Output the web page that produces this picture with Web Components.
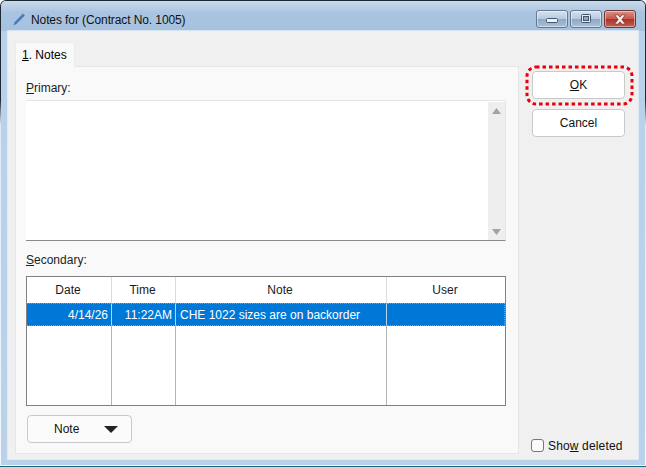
<!DOCTYPE html>
<html><head><meta charset="utf-8">
<style>
html,body{margin:0;padding:0;background:#fff}
body{font:12px "Liberation Sans",Arial,sans-serif;color:#000;width:646px;height:467px;overflow:hidden}
</style></head><body>
<notes-window>
  <notes-tabpane slot="main"></notes-tabpane>
  <notes-side slot="side"></notes-side>
</notes-window>
<template id="t-window"><style>
:host{display:block;width:646px;height:467px;box-sizing:border-box;padding:1px;background:linear-gradient(180deg,#1c2a36 0,#1c2a36 100px,#dfeaf5 125px,#f4f8fc 100%);border-bottom:1px solid #0f6a80;border-radius:6px 6px 0 0;overflow:hidden}
.frame{display:flex;flex-direction:column;height:100%;border-radius:5px 5px 0 0;background:#b9d1ea;overflow:hidden}
.title{height:30px;flex:none;display:flex;align-items:center;padding:7px 0 0 11px;gap:4px;box-sizing:border-box;font-size:12px;letter-spacing:-.1px;color:#111;background:linear-gradient(180deg,#c9daeb 0,#a9c4e0 12px,#a6c2df 100%)}
.title span{flex:1}
.caps{display:flex;gap:2px;align-self:flex-start;margin:2px 9px 0 0}
.cap{width:32px;height:18px;box-sizing:border-box;border:1px solid #64788f;border-radius:3px;background:linear-gradient(180deg,#d7e3ef 0,#b6cbe0 48%,#8fa9c4 52%,#a9c0d8 100%);display:flex;align-items:center;justify-content:center;box-shadow:inset 0 0 0 1px rgba(255,255,255,.45)}
.cap.close{border-color:#6f3530;background:linear-gradient(180deg,#d9938a 0,#c9584c 48%,#a8352a 52%,#c45d50 100%)}
.client{flex:1;display:flex;margin:0 7px 6px;background:#f0f0f0;min-height:0;padding:11px 0 0 7px;box-sizing:border-box;box-shadow:0 0 0 1px rgba(255,255,255,.55)}
</style>
<div class="frame">
<div class="title">
<svg width="15" height="15" viewBox="0 0 15 15"><path d="M1.5 13.5 L2.5 10.2 L11 1.6 L12.9 3.4 L4.4 12 Z" fill="#4a7cb8"/></svg>
<span>Notes for (Contract No. 1005)</span>
<div class="caps">
<div class="cap"><svg width="12" height="8" viewBox="0 0 12 8"><rect x=".5" y="3.5" width="11" height="4" rx="1" fill="#eef3f8" stroke="#41566c"/></svg></div>
<div class="cap"><svg width="12" height="10" viewBox="0 0 12 10"><rect x="1.5" y=".5" width="9" height="8" rx="1" fill="#e6edf4" stroke="#41566c"/><rect x="3.5" y="2.5" width="5" height="4" fill="#8fa9c4" stroke="#41566c"/></svg></div>
<div class="cap close"><svg width="14" height="11" viewBox="0 0 14 11"><path d="M1.5 .8 H5 L7 3.2 L9 .8 H12.5 L8.9 5.5 L12.5 10.2 H9 L7 7.8 L5 10.2 H1.5 L5.1 5.5 Z" fill="#f5ecea" stroke="#6d2a24" stroke-width=".7"/></svg></div>
</div></div>
<div class="client"><slot name="main"></slot><slot name="side"></slot></div>
</div>
</template>

<template id="t-tabpane"><style>
:host{display:flex;flex-direction:column;width:504px;flex:none}
.tab{width:60px;height:25px;box-sizing:border-box;background:#f9f9f9;border:1px solid #ececec;border-bottom:0;display:flex;align-items:center;padding-left:6px;position:relative;z-index:1;margin-bottom:-1px}
.panel{background:#f9f9f9;border:1px solid #e6e6e6;padding:14px 12px 0 10px;display:flex;flex-direction:column;box-sizing:border-box;height:388px}
u{text-underline-offset:1px}
.label{height:15px;line-height:15px;margin-bottom:4px;color:#222}
.text{height:141px;flex:none;box-sizing:border-box;background:#fff;border-bottom:1px solid #8a8a8a;border-top:1px solid #e6e6e6;border-right:1px solid #e6e6e6;display:flex;justify-content:flex-end;margin-bottom:12px}
.sb{width:17px;margin-top:1px;background:#eeeeee;display:flex;flex-direction:column;justify-content:space-between;align-items:center;padding:6px 0 5px;box-sizing:border-box}
.sb svg{display:block}
.btn-row{margin-top:9px;padding-left:1px}
</style>
<div class="tab"><span><u>1</u>. Notes</span></div>
<div class="panel">
<div class="label"><u>P</u>rimary:</div>
<div class="text"><div class="sb">
<svg width="9" height="6"><path d="M4.5 0 L9 6 H0 Z" fill="#a3a3a3"/></svg>
<svg width="9" height="6"><path d="M0 0 H9 L4.5 6 Z" fill="#a3a3a3"/></svg>
</div></div>
<div class="label" style="margin-bottom:8px"><u>S</u>econdary:</div>
<notes-grid></notes-grid>
<div class="btn-row"><notes-button menu>Note</notes-button></div>
</div>
</template>

<template id="t-grid"><style>
:host{display:grid;grid-template-columns:85px 64px 211px 1fr;grid-template-rows:26px 23px 1fr;width:480px;height:130px;box-sizing:border-box;border:1px solid #808085;background:#fff;flex:none}
div{box-sizing:border-box;border-right:1px solid #b4b4b4;display:flex;align-items:center;white-space:nowrap;min-width:0}
.h{justify-content:center;border-right-color:#dcdcdc;color:#1a1a1a;padding-right:2px}
.last{border-right:0}
.r{background:#0078d7;color:#fff;border-top:1px dotted #e8842c;border-bottom:1px dotted #e8842c;border-right-color:#bcd3e8}
.num{justify-content:flex-end;padding-right:3px}
.note{padding-left:4px}
.r.last{border-right:1px dotted #e8842c}
</style>
<div class="h">Date</div><div class="h">Time</div><div class="h">Note</div><div class="h last">User</div>
<div class="r num">4/14/26</div><div class="r num">11:22AM</div><div class="r note">CHE 1022 sizes are on backorder</div><div class="r last"></div>
<div></div><div></div><div></div><div class="last"></div>
</template>

<template id="t-button"><style>
:host{display:inline-flex;box-sizing:border-box;height:28px;width:93px;border:1px solid #c9c9c9;border-radius:4px;background:#fff;align-items:center;justify-content:center;position:relative;color:#111}
:host([menu]){width:105px;background:#fbfbfb;justify-content:flex-start;padding-left:26px;gap:25px}
svg.arrow{display:none}
:host([menu]) svg.arrow{display:block}
</style><slot></slot><svg class="arrow" width="14" height="7"><path d="M0 0 H14 L7 7 Z" fill="#222"/></svg>
</template>

<template id="t-side"><style>
:host{flex:1;display:flex;flex-direction:column;padding:29px 0 0 13px;box-sizing:border-box;min-width:0}
.ok{position:relative;display:flex;margin-bottom:10px}
.ring{position:absolute;left:-7px;top:-6px;pointer-events:none}
.chk{margin-top:auto;margin-bottom:6px;margin-left:-1px;display:flex;align-items:center;gap:4px;height:15px;color:#111;letter-spacing:.15px}
.box{width:13px;height:13px;box-sizing:border-box;border:1px solid #777;border-radius:3px;background:#fafafa}
u{text-underline-offset:1px}
</style>
<div class="ok"><notes-button><span><u>O</u>K</span></notes-button>
<svg class="ring" width="110" height="42" viewBox="0 0 110 42"><rect x="2" y="2" width="105" height="37" rx="9" fill="none" stroke="#e8000c" stroke-width="3" stroke-dasharray="3.5 3"/></svg></div>
<notes-button>Cancel</notes-button>
<div class="chk"><div class="box"></div><span>Sho<u>w</u> deleted</span></div>
</template>

<script>
function def(tag,tpl){customElements.define(tag,class extends HTMLElement{constructor(){super();this.attachShadow({mode:'open'}).appendChild(document.getElementById(tpl).content.cloneNode(true));}});}
def('notes-button','t-button');
def('notes-grid','t-grid');
def('notes-side','t-side');
def('notes-tabpane','t-tabpane');
def('notes-window','t-window');
</script>
</body></html>
